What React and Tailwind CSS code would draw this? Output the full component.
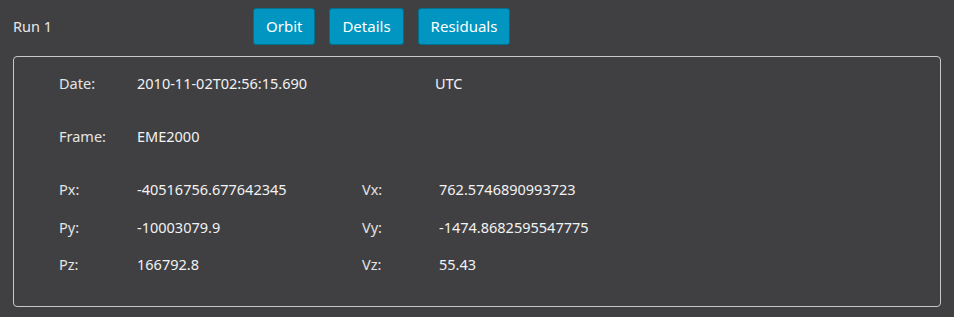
const rows = [
  { label: 'Px:', value: '-40516756.677642345', vlabel: 'Vx:', vvalue: '762.5746890993723' },
  { label: 'Py:', value: '-10003079.9', vlabel: 'Vy:', vvalue: '-1474.8682595547775' },
  { label: 'Pz:', value: '166792.8', vlabel: 'Vz:', vvalue: '55.43' },
];

const buttons = ['Orbit', 'Details', 'Residuals'];

export default function App() {
  return (
    <div className="w-[954px] h-[317px] bg-[#404042] text-[14.5px] text-[#f2f2f2] font-['Noto_Sans',sans-serif] overflow-hidden">
      {/* Header */}
      <div className="flex items-center h-[52px] pl-[13px] pt-[1px]">
        <div className="w-[240px] text-[#e8e8e8]">Run 1</div>
        <div className="flex gap-[14px]">
          {buttons.map((b) => (
            <button
              key={b}
              className="h-[37px] px-[12px] text-[15px] text-white bg-[#0096c1] border border-[#007090] rounded-[3px]"
            >
              {b}
            </button>
          ))}
        </div>
      </div>

      {/* Panel */}
      <div className="mx-[13px] mt-[4px] h-[251px] border border-[#c8c8c8] rounded-[4px] pt-[8px] pl-[45px]">
        <div className="flex items-center h-[38px] mb-[15px]">
          <div className="w-[78px] text-[#e4e4e4]">Date:</div>
          <div className="w-[298px]">2010-11-02T02:56:15.690</div>
          <div>UTC</div>
        </div>
        <div className="flex items-center h-[38px] mb-[15px]">
          <div className="w-[78px] text-[#e4e4e4]">Frame:</div>
          <div>EME2000</div>
        </div>
        {rows.map((r) => (
          <div key={r.label} className="flex items-center h-[38px] -mb-[0.5px]">
            <div className="w-[78px] text-[#e4e4e4]">{r.label}</div>
            <div className="w-[225px]">{r.value}</div>
            <div className="w-[77px] text-[#e4e4e4]">{r.vlabel}</div>
            <div>{r.vvalue}</div>
          </div>
        ))}
      </div>
    </div>
  );
}
